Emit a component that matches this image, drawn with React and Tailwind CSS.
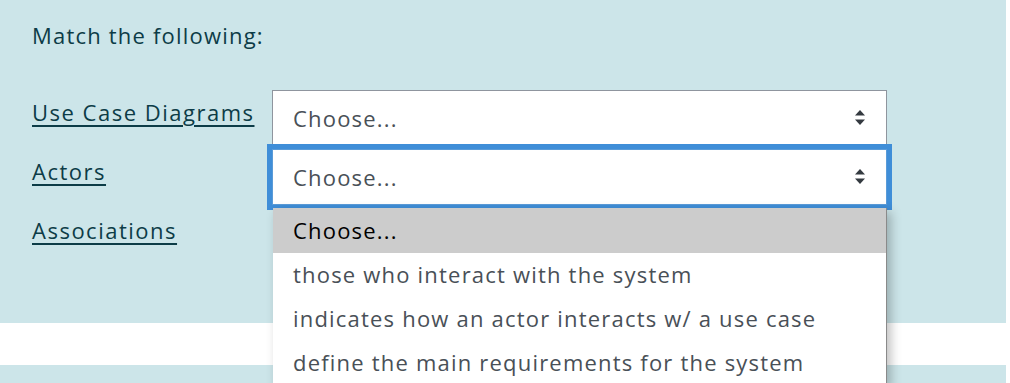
import React from "react";

function Arrows() {
  return (
    <svg width="10" height="16" viewBox="0 0 10 16" className="shrink-0">
      <path d="M5 0 L10 5.5 L0 5.5 Z" fill="#343a40" />
      <path d="M0 9.5 L10 9.5 L5 15 Z" fill="#343a40" />
    </svg>
  );
}

function Select({ focused }) {
  return (
    <div
      className={
        "relative h-[56px] w-[615px] bg-white flex items-center justify-between pl-[20px] pr-[21px] border " +
        (focused
          ? "border-[#5a9bd8] outline-[5px] outline-solid outline-[#3f8ed8]"
          : "border-[#8f959e]")
      }
    >
      <span className="text-[22px] tracking-[1.2px] text-[#495057]">Choose...</span>
      <Arrows />
    </div>
  );
}

export default function App() {
  const font = { fontFamily: '"Open Sans", "Noto Sans", sans-serif' };
  const rows = ["Use Case Diagrams", "Actors", "Associations"];
  return (
    <div className="w-[1010px] h-[383px] bg-white overflow-hidden relative" style={font}>
      <div className="w-[1006px] h-[323px] bg-[#cce5e9] pl-[32px] pt-[21px]">
        <div className="text-[22px] tracking-[1.2px] leading-[28px] text-[#0c3c47]">Match the following:</div>
        <div className="mt-[41px] flex flex-col gap-[3px]">
          {rows.map((r, i) => (
            <div key={r} className="flex items-start">
              <div className="w-[240px] pt-[8px]">
                <a className="text-[22px] tracking-[1.5px] leading-[28px] text-[#0c3c47] underline decoration-[2px] underline-offset-[4px]">
                  {r}
                </a>
              </div>
              {i < 2 ? <Select focused={i === 1} /> : <div className="h-[56px]" />}
            </div>
          ))}
        </div>
      </div>
      <div className="h-[42px]" />
      <div className="w-[1006px] h-[18px] bg-[#cce5e9]" />

      <div className="absolute left-[273px] top-[208px] w-[614px] bg-white border-r border-[#8a8a8a] shadow-[4px_4px_10px_rgba(0,0,0,0.25)]">
        <div className="h-[45px] bg-[#cccccc] flex items-center pl-[20px] text-[22px] tracking-[1.2px] text-black">Choose...</div>
        {[
          "those who interact with the system",
          "indicates how an actor interacts w/ a use case",
          "define the main requirements for the system",
        ].map((t) => (
          <div key={t} className="h-[44px] -mt-[1px] mb-[1px] flex items-center pl-[20px] text-[22px] tracking-[1.2px] text-[#495057]">
            {t}
          </div>
        ))}
      </div>
    </div>
  );
}
